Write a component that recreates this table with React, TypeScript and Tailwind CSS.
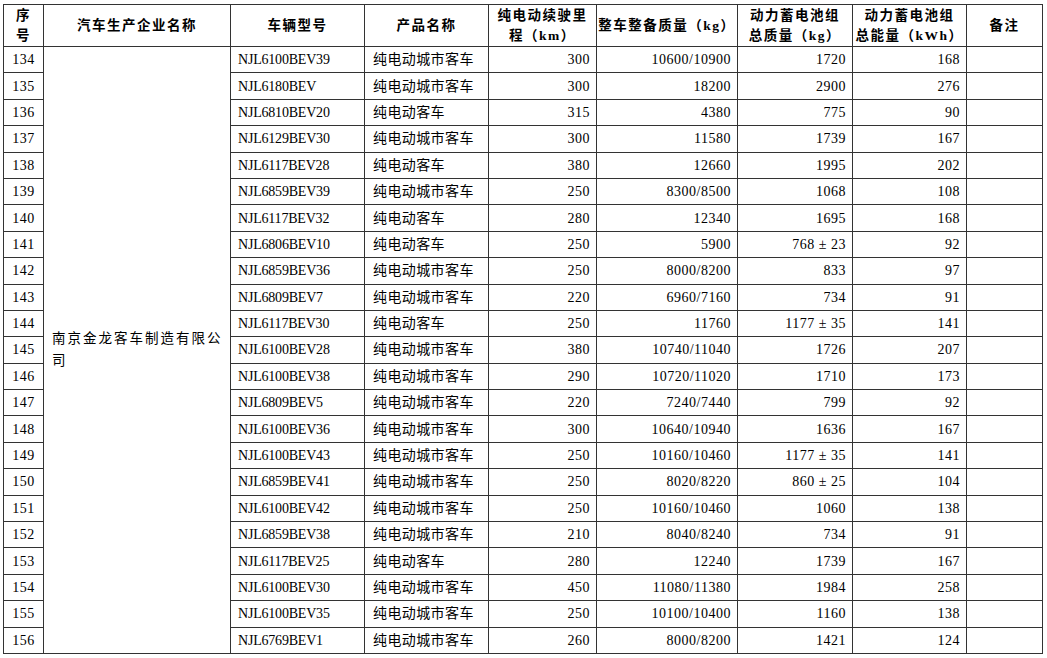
const rows: [number, string, string, string, string, string, string][] = [
  [134, "NJL6100BEV39", "纯电动城市客车", "300", "10600/10900", "1720", "168"],
  [135, "NJL6180BEV", "纯电动城市客车", "300", "18200", "2900", "276"],
  [136, "NJL6810BEV20", "纯电动客车", "315", "4380", "775", "90"],
  [137, "NJL6129BEV30", "纯电动城市客车", "300", "11580", "1739", "167"],
  [138, "NJL6117BEV28", "纯电动客车", "380", "12660", "1995", "202"],
  [139, "NJL6859BEV39", "纯电动城市客车", "250", "8300/8500", "1068", "108"],
  [140, "NJL6117BEV32", "纯电动客车", "280", "12340", "1695", "168"],
  [141, "NJL6806BEV10", "纯电动客车", "250", "5900", "768±23", "92"],
  [142, "NJL6859BEV36", "纯电动城市客车", "250", "8000/8200", "833", "97"],
  [143, "NJL6809BEV7", "纯电动城市客车", "220", "6960/7160", "734", "91"],
  [144, "NJL6117BEV30", "纯电动客车", "250", "11760", "1177±35", "141"],
  [145, "NJL6100BEV28", "纯电动城市客车", "380", "10740/11040", "1726", "207"],
  [146, "NJL6100BEV38", "纯电动城市客车", "290", "10720/11020", "1710", "173"],
  [147, "NJL6809BEV5", "纯电动城市客车", "220", "7240/7440", "799", "92"],
  [148, "NJL6100BEV36", "纯电动城市客车", "300", "10640/10940", "1636", "167"],
  [149, "NJL6100BEV43", "纯电动城市客车", "250", "10160/10460", "1177±35", "141"],
  [150, "NJL6859BEV41", "纯电动城市客车", "250", "8020/8220", "860±25", "104"],
  [151, "NJL6100BEV42", "纯电动城市客车", "250", "10160/10460", "1060", "138"],
  [152, "NJL6859BEV38", "纯电动城市客车", "210", "8040/8240", "734", "91"],
  [153, "NJL6117BEV25", "纯电动客车", "280", "12240", "1739", "167"],
  [154, "NJL6100BEV30", "纯电动城市客车", "450", "11080/11380", "1984", "258"],
  [155, "NJL6100BEV35", "纯电动城市客车", "250", "10100/10400", "1160", "138"],
  [156, "NJL6769BEV1", "纯电动城市客车", "260", "8000/8200", "1421", "124"],
];

const widths = [40, 187, 134, 124, 108, 141, 115, 114, 76];

function fmt(v: string) {
  return v.includes("±") ? v.replace("±", " ± ") : v;
}

export default function App() {
  const th =
    "border border-[#333] font-bold text-center align-middle leading-[20px] text-[13.5px] tracking-[1.5px] text-black";
  const td = "border border-[#333] h-[26.4px] align-middle p-0 text-[14px] text-black";
  const num = `${td} text-right pr-[6px] tracking-[0.5px]`;
  return (
    <div className="bg-white w-[1047px] h-[658px] overflow-hidden pt-[4px] pl-[3px]">
      <table
        className="table-fixed border-collapse w-[1040px]"
        style={{ fontFamily: '"Liberation Serif", "Noto Sans CJK SC", serif' }}
      >
        <colgroup>
          {widths.map((w, i) => (
            <col key={i} style={{ width: w }} />
          ))}
        </colgroup>
        <thead>
          <tr className="h-[42px]">
            <th className={th}>
              序<br />号
            </th>
            <th className={th}>汽车生产企业名称</th>
            <th className={th}>车辆型号</th>
            <th className={th}>产品名称</th>
            <th className={th}>
              纯电动续驶里<br />程（km）
            </th>
            <th className={th}>整车整备质量（kg）</th>
            <th className={th}>
              动力蓄电池组<br />总质量（kg）
            </th>
            <th className={th}>
              动力蓄电池组<br />总能量（kWh）
            </th>
            <th className={th}>备注</th>
          </tr>
        </thead>
        <tbody>
          {rows.map((r, i) => (
            <tr key={r[0]}>
              <td className={`${td} text-center tracking-[0.5px]`}>{r[0]}</td>
              {i === 0 && (
                <td
                  rowSpan={rows.length}
                  className="border border-[#333] align-middle pl-[8px] pr-[4px] text-[13.5px] tracking-[2px] leading-[22px] text-black"
                >
                  南京金龙客车制造有限公司
                </td>
              )}
              <td className={`${td} pl-[7px] text-[13.5px] tracking-[-0.2px]`}>{r[1]}</td>
              <td className={`${td} pl-[8px] tracking-[0.4px]`}>{r[2]}</td>
              <td className={num}>{r[3]}</td>
              <td className={num}>{r[4]}</td>
              <td className={num}>{fmt(r[5])}</td>
              <td className={num}>{r[6]}</td>
              <td className={td}></td>
            </tr>
          ))}
        </tbody>
      </table>
    </div>
  );
}
